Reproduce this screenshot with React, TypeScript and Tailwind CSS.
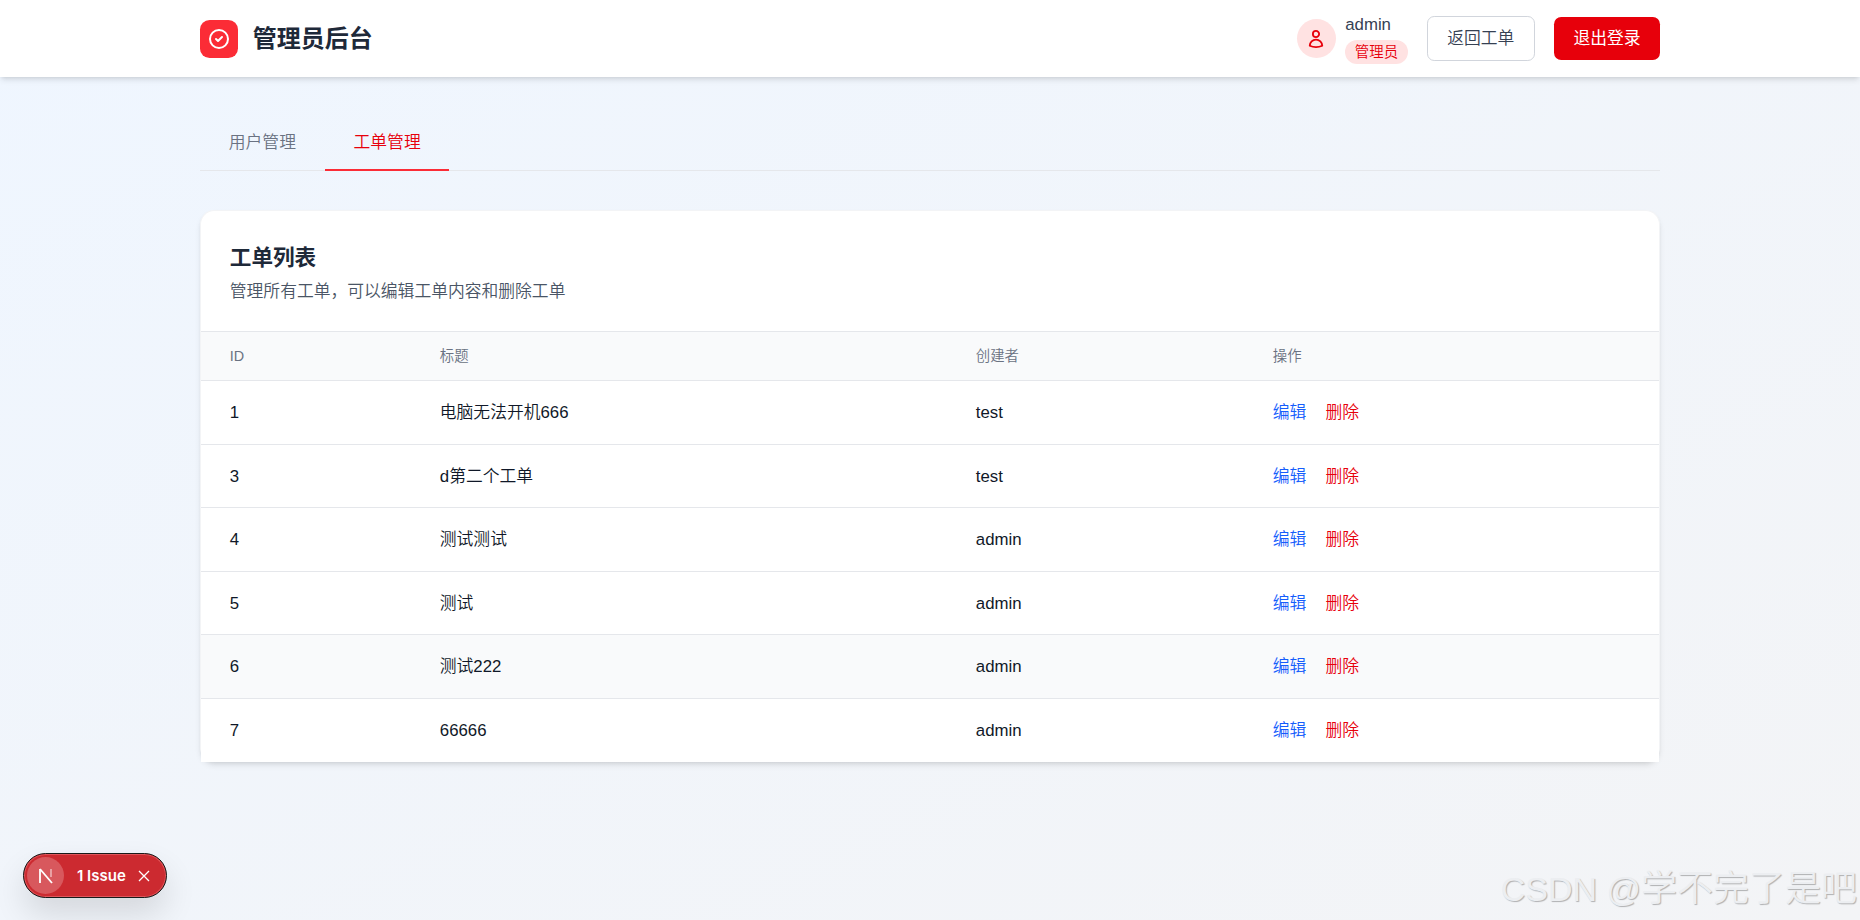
const rows = [
  { id: 1, title: "电脑无法开机666", creator: "test" },
  { id: 3, title: "d第二个工单", creator: "test" },
  { id: 4, title: "测试测试", creator: "admin" },
  { id: 5, title: "测试", creator: "admin" },
  { id: 6, title: "测试222", creator: "admin" },
  { id: 7, title: "66666", creator: "admin" },
];

function Header() {
  return (
    <header className="bg-white shadow-md h-[77.4px]">
      <div className="mx-auto w-[1460px] h-full flex items-center justify-between">
        <div className="flex items-center gap-[14.4px]">
          <div className="w-[38.4px] h-[38.4px] rounded-[9.6px] bg-[#fb2c36] flex items-center justify-center">
            <svg
              fill="none"
              viewBox="0 0 24 24"
              stroke="white"
              strokeWidth={2}
              className="w-[24px] h-[24px]"
            >
              <path
                strokeLinecap="round"
                strokeLinejoin="round"
                d="M9 12l2 2 4-4m6 2a9 9 0 11-18 0 9 9 0 0118 0z"
              />
            </svg>
          </div>
          <h1 className="pt-[1.5px] text-[24px] leading-[32px] font-bold text-[#1e2939]">管理员后台</h1>
        </div>

        <div className="flex items-center">
          <div className="w-[38.4px] h-[38.4px] rounded-full bg-[#ffe2e2] flex items-center justify-center">
            <svg
              fill="none"
              viewBox="0 0 24 24"
              stroke="#e7000b"
              strokeWidth={2.2}
              className="w-[20px] h-[20px]"
            >
              <path
                strokeLinecap="round"
                strokeLinejoin="round"
                d="M15.75 6a3.75 3.75 0 11-7.5 0 3.75 3.75 0 017.5 0zM4.501 20.118a7.5 7.5 0 0114.998 0A17.933 17.933 0 0112 21.75c-2.676 0-5.216-.584-7.499-1.632z"
              />
            </svg>
          </div>
          <div className="ml-[9.6px] flex flex-col items-start">
            <span className="text-[16.8px] leading-[24px] text-[#364153]">admin</span>
            <span className="mt-[3px] px-[9.6px] h-[24px] rounded-full bg-[#ffe2e2] text-[#e7000b] text-[14.4px] leading-[24px] font-[350]">
              管理员
            </span>
          </div>
          <button className="ml-[19.2px] w-[108px] h-[45px] rounded-[7.2px] bg-white border border-[#d1d5dc] text-[#364153] text-[16.8px] font-[350]">
            返回工单
          </button>
          <button className="ml-[19.2px] w-[106px] h-[43.2px] rounded-[7.2px] bg-[#e7000b] text-white text-[16.8px]">
            退出登录
          </button>
        </div>
      </div>
    </header>
  );
}

function Tabs() {
  return (
    <div className="flex border-b-[1.2px] border-[#e5e7eb] text-[16.8px] leading-[24px] font-[350]">
      <div className="px-[28.8px] pt-[24.6px] pb-[14.2px] text-[#6a7282] border-b-[2.4px] border-transparent mb-[-1.2px]">
        用户管理
      </div>
      <div className="px-[28.8px] pt-[24.6px] pb-[14.2px] text-[#e7000b] border-b-[2.4px] border-[#fb2c36] mb-[-1.2px]">
        工单管理
      </div>
    </div>
  );
}

function TicketTable() {
  return (
    <div className="mt-[39.4px] bg-white rounded-[14.4px] shadow-md border-x-[1.2px] border-t-[1.2px] border-[#f3f4f6]">
      <div className="pt-[29.8px] px-[28.8px] pb-[26.8px]">
        <h2 className="text-[21.6px] leading-[33.6px] font-bold text-[#1e2939]">工单列表</h2>
        <p className="mt-[5.6px] text-[16.8px] leading-[24px] text-[#4a5565] font-[350]">
          管理所有工单，可以编辑工单内容和删除工单
        </p>
      </div>
      <table className="w-full table-fixed border-collapse text-left">
        <thead>
          <tr className="bg-[#f9fafb] border-y-[1.2px] border-[#e5e7eb] text-[14.4px] leading-[19.2px] text-[#6a7282]">
            <th className="w-[210px] pl-[28.8px] pt-[15px] pb-[13.8px] font-[350]">ID</th>
            <th className="w-[536px] pl-[28.8px] pt-[15px] pb-[13.8px] font-[350]">标题</th>
            <th className="w-[297px] pl-[28.8px] pt-[15px] pb-[13.8px] font-[350]">创建者</th>
            <th className="pl-[28.8px] pt-[15px] pb-[13.8px] font-[350]">操作</th>
          </tr>
        </thead>
        <tbody className="text-[16.8px] leading-[24px] text-[#101828] font-[350]">
          {rows.map((row) => (
            <tr
              key={row.id}
              className={
                row.id === 6
                  ? "bg-[#f9fafb] border-b-[1.2px] border-[#e5e7eb] last:border-b-0"
                  : "bg-white border-b-[1.2px] border-[#e5e7eb] last:border-b-0"
              }
            >
              <td className="pl-[28.8px] pt-[20px] pb-[18.6px]">{row.id}</td>
              <td className="pl-[28.8px] pt-[20px] pb-[18.6px]">{row.title}</td>
              <td className="pl-[28.8px] pt-[20px] pb-[18.6px]">{row.creator}</td>
              <td className="pl-[28.8px] pt-[20px] pb-[18.6px]">
                <span className="text-[#155dfc]">编辑</span>
                <span className="ml-[19.2px] text-[#e7000b]">删除</span>
              </td>
            </tr>
          ))}
        </tbody>
      </table>
    </div>
  );
}

export default function App() {
  return (
    <div
      className="relative h-[920px] overflow-hidden bg-gradient-to-br from-[#eff6ff] to-[#f3f4f6]"
      style={{ fontFamily: '"Liberation Sans", "Noto Sans CJK SC", sans-serif' }}
    >
      <Header />
      <main className="mx-auto w-[1460px] pt-[28.8px]">
        <Tabs />
        <TicketTable />
      </main>

      {/* Next dev indicator */}
      <div className="absolute left-[23px] top-[853px] w-[144px] h-[45px] rounded-full bg-[#cc2a30] border border-[#1a1a1a] shadow-[inset_0_0_0_1px_#e0555a,0_16px_32px_rgba(0,0,0,0.12)] flex items-center">
        <div className="ml-[3px] w-[37px] h-[37px] rounded-full bg-[#d8585d] flex items-center justify-center">
          <svg viewBox="0 0 20 20" fill="none" className="w-[20px] h-[20px]">
            <path d="M4 3v14" stroke="white" strokeWidth={1.8} />
            <path d="M4 3L16 17" stroke="white" strokeWidth={1.8} />
            <path d="M15 3v8" stroke="white" strokeOpacity={0.55} strokeWidth={1.6} />
          </svg>
        </div>
        <span className="ml-[13px] pt-[1.5px] text-white text-[15px] font-semibold" style={{ fontFamily: "Inter, sans-serif" }}>
          1 Issue
        </span>
        <svg viewBox="0 0 16 16" stroke="white" strokeWidth={1.3} className="ml-[10px] w-[16px] h-[16px]">
          <path d="M3 3l10 10M13 3L3 13" />
        </svg>
      </div>

      {/* Watermark */}
      <div className="absolute right-[3px] top-[866px] text-[36px] leading-[46px] font-[350] text-[#eceef1] whitespace-nowrap [text-shadow:1px_1px_1px_rgba(0,0,0,0.28)]">
        <span className="text-[34px]">CSDN @</span>学不完了是吧
      </div>
    </div>
  );
}
